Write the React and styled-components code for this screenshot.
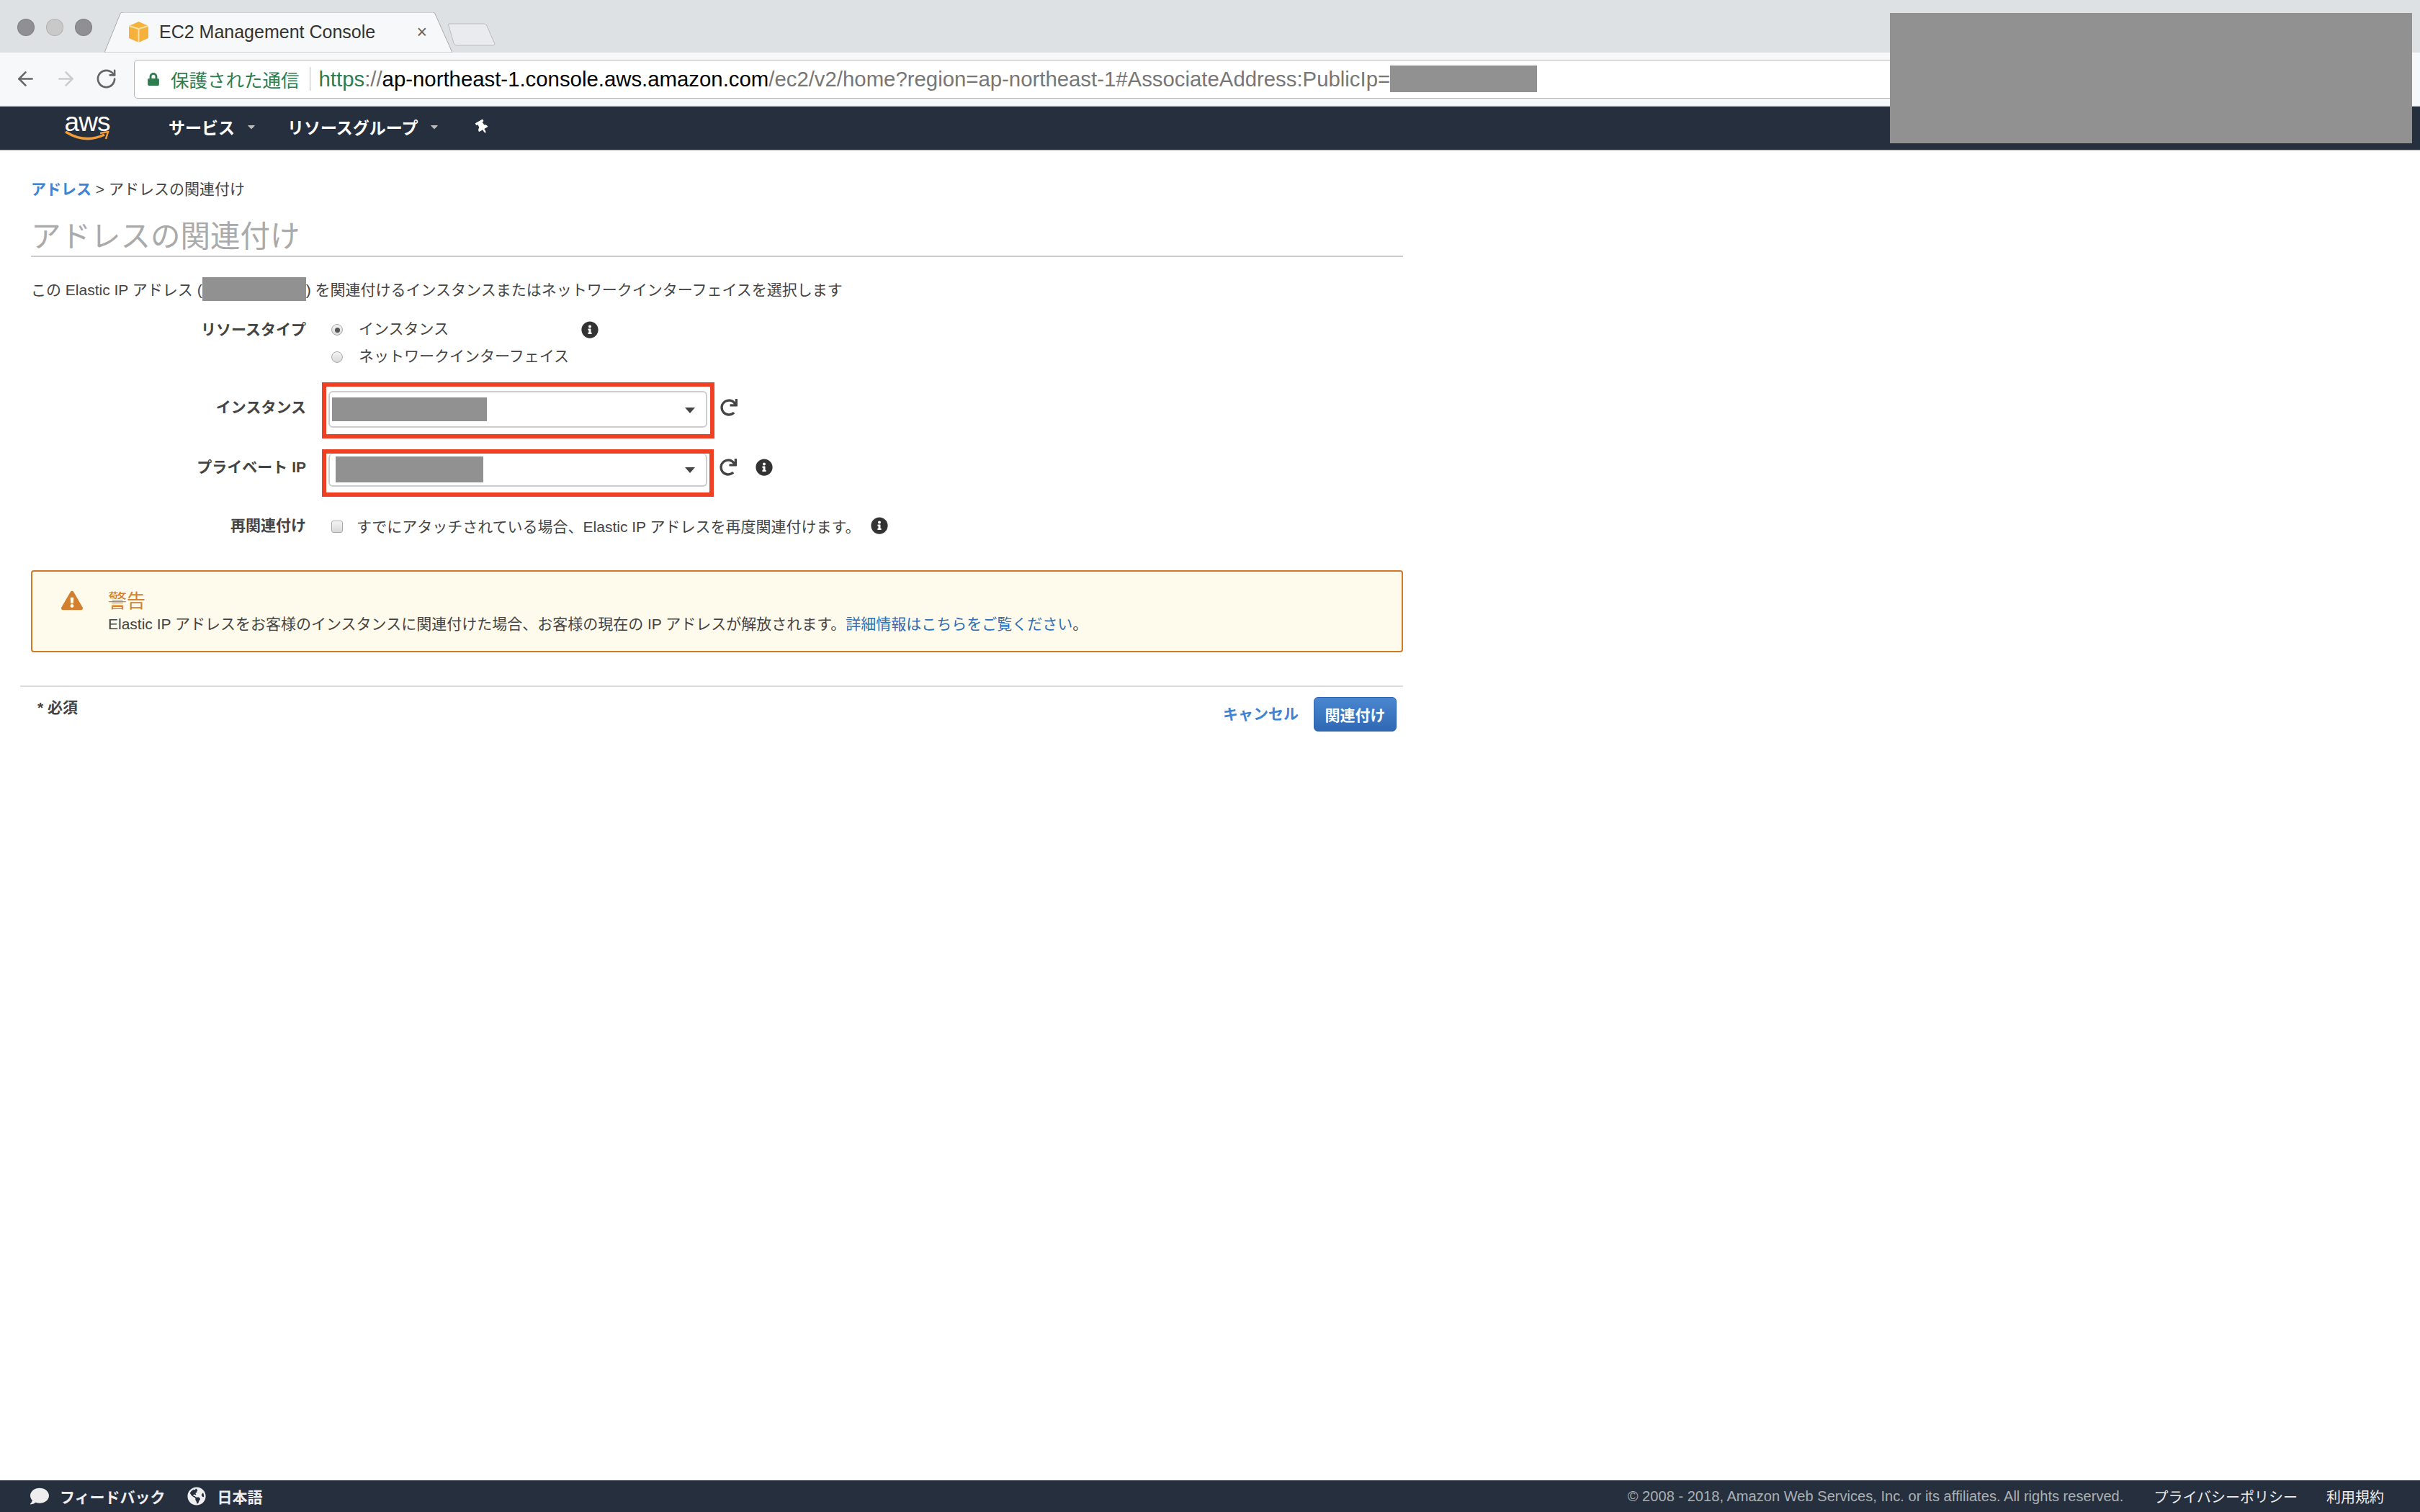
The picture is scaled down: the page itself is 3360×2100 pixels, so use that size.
import React from 'react';
import styled, { createGlobalStyle } from 'styled-components';
import { ArrowLeft, ArrowRight, RotateCw } from 'lucide-react';
import {
  FaInfoCircle,
  FaRedo,
  FaExclamationTriangle,
  FaComment,
  FaGlobeAmericas,
  FaThumbtack,
  FaLock,
  FaCaretDown,
} from 'react-icons/fa';

const GlobalStyle = createGlobalStyle`
html {
  box-sizing: border-box;
}
*, *:before, *:after {
  box-sizing: inherit;
}
body {
  margin: 0;
  background: #fff;
  color: #444;
  font-family: "Liberation Sans", "Noto Sans CJK JP", sans-serif;
  font-size: 21px;
}
`;

const Page = styled.div`
  position: relative;
  display: flex;
  flex-direction: column;
  width: 3360px;
  height: 2100px;
  overflow: hidden;
`;

const Redacted = styled.span`
  display: inline-block;
  flex: none;
  width: ${p => p.$w}px;
  height: ${p => p.$h}px;
  background: #919191;
  vertical-align: middle;
`;

const CornerRedaction = styled.div`
  position: absolute;
  top: 18px;
  left: 2624px;
  width: 725px;
  height: 181px;
  background: #919191;
`;

/* browser chrome */
const TabStrip = styled.div`
  display: flex;
  align-items: flex-end;
  height: 73px;
  background: #dee1e4;
`;

const Lights = styled.div`
  display: flex;
  gap: 16px;
  align-self: flex-start;
  margin: 26px 0 0 24px;
`;

const Light = styled.span`
  width: 24px;
  height: 24px;
  border-radius: 50%;
  background: ${p => p.$color};
  border: 1px solid rgba(0, 0, 0, 0.12);
`;

const Tab = styled.div`
  position: relative;
  display: flex;
  align-items: center;
  width: 483px;
  height: 56px;
  margin-left: 17px;
  padding: 0 0 2px 33px;
  color: #333;
  font-size: 25px;
`;

const TabShape = styled.svg`
  position: absolute;
  inset: 0;
  width: 100%;
  height: 100%;
`;

const TabIcon = styled.svg`
  position: relative;
  flex: none;
  width: 29px;
  height: 29px;
  margin-right: 14px;
`;

const TabTitle = styled.span`
  position: relative;
  flex: 1;
`;

const TabClose = styled.span`
  position: relative;
  margin-right: 35px;
  color: #666;
  font-size: 25px;
`;

const NewTab = styled.svg`
  flex: none;
  width: 66px;
  height: 32px;
  margin: 0 0 9px -6px;
`;

const Toolbar = styled.div`
  display: flex;
  align-items: center;
  height: 75px;
  padding: 0 30px 1px 0;
  background: #f6f8fa;
  border-bottom: 1px solid #ccc;
`;

const NavIcons = styled.div`
  display: flex;
  align-items: center;
  gap: 25px;
  width: 186px;
  padding-left: 20px;
  color: #666;
`;

const AddressBar = styled.div`
  flex: 1;
  display: flex;
  align-items: center;
  height: 54px;
  padding-left: 17px;
  background: #fff;
  border: 1px solid #b5b5b5;
  border-radius: 5px;
  font-size: 29.35px;
  color: #777;
  white-space: nowrap;
`;

const Secure = styled.span`
  display: flex;
  align-items: center;
  gap: 15px;
  height: 33px;
  padding-right: 14px;
  margin-right: 12px;
  border-right: 1px solid #bbb;
  color: #2e7d4f;
  font-size: 25.5px;
`;

const Scheme = styled.span`
  color: #2e7d4f;
`;

const Host = styled.span`
  color: #000;
`;

/* aws console bar */
const ConsoleBar = styled.div`
  display: flex;
  align-items: center;
  height: 62px;
  padding: 0 0 4px 90px;
  background: #262f3e;
  border-bottom: 2px solid #d8d8d8;
  color: #fff;
`;

const AwsLogo = styled.div`
  display: flex;
  flex-direction: column;
  align-items: center;
  width: 62px;
  margin-right: 82px;
`;

const AwsWord = styled.span`
  font-size: 37px;
  line-height: 24px;
  height: 24px;
  letter-spacing: -1px;
`;

const AwsSmile = styled.svg`
  width: 62px;
  height: 13px;
`;

const ConsoleMenu = styled.span`
  display: flex;
  align-items: center;
  margin-right: ${p => p.$gap}px;
  font-size: 23px;
  font-weight: 700;
`;

const Caret = styled(FaCaretDown)`
  width: 16px;
  height: 16px;
  margin-left: 15px;
  color: #bbb;
`;

const Pin = styled(FaThumbtack)`
  width: 17px;
  height: 19px;
  transform: rotate(-30deg);
`;

/* page content */
const Main = styled.main`
  flex: 1;
  width: 1948px;
  padding: 38px 0 0 43px;
`;

const Breadcrumb = styled.div`
  height: 30px;
  line-height: 30px;
  color: #444;
`;

const Link = styled.a`
  color: ${p => (p.$soft ? '#2f6db5' : '#3f83d4')};
  font-weight: ${p => (p.$soft ? 400 : 700)};
`;

const Title = styled.h1`
  margin: 26px 0 0;
  height: 53px;
  line-height: 50px;
  font-size: 41.5px;
  font-weight: 400;
  color: #aaa;
  border-bottom: 2px solid #ccc;
`;

const Description = styled.p`
  display: flex;
  align-items: center;
  gap: 0;
  height: 36px;
  margin: 26px 0 0;
  white-space: pre;
`;

const Form = styled.div`
  display: grid;
  grid-template-columns: 382px 1fr;
  column-gap: 22px;
  align-items: center;
  margin-top: 20px;
`;

const Label = styled.div`
  align-self: ${p => (p.$top ? 'start' : 'center')};
  text-align: right;
  font-weight: 700;
  line-height: 38px;
  margin-top: ${p => p.$mt || 0}px;
  padding-bottom: ${p => p.$lift || 0}px;
`;

const Field = styled.div`
  display: flex;
  align-items: center;
  min-height: 38px;
  margin-top: ${p => p.$mt || 0}px;
`;

const RadioList = styled.div`
  display: flex;
  flex-direction: column;
  padding-left: 13px;
`;

const RadioRow = styled.div`
  display: flex;
  align-items: center;
  height: 38px;
  line-height: 34px;
`;

const Radio = styled.span`
  display: flex;
  align-items: center;
  justify-content: center;
  width: 16px;
  height: 16px;
  margin-right: 22px;
  border-radius: 50%;
  border: 1px solid #aaa;
  background: linear-gradient(#f4f4f4, #d8d8d8);
  &::after {
    content: '';
    display: ${p => (p.$on ? 'block' : 'none')};
    width: 7px;
    height: 7px;
    border-radius: 50%;
    background: #555;
  }
`;

const RadioText = styled.span`
  margin-bottom: 3px;
`;

const Info = styled(FaInfoCircle)`
  flex: none;
  width: 24px;
  height: 24px;
  color: #333;
  margin-left: ${p => p.$ml || 0}px;
  margin-bottom: ${p => p.$lift || 0}px;
  align-self: ${p => (p.$top ? 'flex-start' : 'center')};
  margin-top: ${p => (p.$top ? 7 : 0)}px;
`;

const Highlight = styled.div`
  flex: none;
  width: ${p => p.$w}px;
  height: ${p => p.$h}px;
  padding: ${p => p.$pad};
  border: 6px solid #ee4023;
`;

const Select = styled.div`
  display: flex;
  align-items: center;
  justify-content: space-between;
  height: 100%;
  padding: ${p => (p.$clipped ? '0 15px 0 8px' : '0 15px 0 3px')};
  background: #fff;
  border: 2px solid #ccc;
  border-top-width: ${p => (p.$clipped ? 0 : 2)}px;
  border-radius: 6px;
`;

const SelectArrow = styled.span`
  width: 0;
  height: 0;
  margin-top: 2px;
  border-left: 7px solid transparent;
  border-right: 7px solid transparent;
  border-top: 8px solid #444;
`;

const Refresh = styled(FaRedo)`
  flex: none;
  width: 24px;
  height: 24px;
  margin-left: 8px;
  margin-bottom: ${p => p.$lift || 0}px;
  color: #444;
`;

const Checkbox = styled.span`
  flex: none;
  width: 16px;
  height: 17px;
  margin: 2px 19px 0 13px;
  border: 1px solid #aaa;
  border-radius: 3px;
  background: linear-gradient(#f4f4f4, #d8d8d8);
`;

const Alert = styled.div`
  display: flex;
  height: 114px;
  margin-top: 43px;
  padding: 26px 0 0 40px;
  background: #fffbec;
  border: 2px solid #cf7a28;
  border-radius: 4px;
`;

const AlertIcon = styled(FaExclamationTriangle)`
  flex: none;
  width: 30px;
  height: 28px;
  margin-right: 35px;
  color: #d27f2f;
`;

const AlertTitle = styled.div`
  font-size: 26px;
  line-height: 30px;
  color: #d27f2f;
`;

const AlertBody = styled.div`
  margin-top: 2px;
  line-height: 30px;
`;

const Actions = styled.div`
  display: flex;
  justify-content: space-between;
  align-items: flex-start;
  margin: 46px 0 0 -15px;
  padding: 14px 9px 0 24px;
  border-top: 2px solid #ddd;
`;

const Required = styled.span`
  margin-top: 2px;
  line-height: 26px;
  font-weight: 700;
`;

const ActionGroup = styled.div`
  display: flex;
  align-items: center;
  gap: 21px;
`;

const Cancel = styled.a`
  padding-bottom: 4px;
  color: #3f83d4;
  font-weight: 700;
`;

const Submit = styled.button`
  width: 115px;
  height: 48px;
  padding: 0;
  background: linear-gradient(#4a87d0, #2f68b4);
  border: 1px solid #2c62ab;
  border-radius: 6px;
  color: #fff;
  font: 700 21px "Liberation Sans", "Noto Sans CJK JP", sans-serif;
`;

/* footer */
const Footer = styled.footer`
  display: flex;
  align-items: center;
  height: 44px;
  padding: 0 50px 0 42px;
  background: #262f3e;
  color: #eee;
`;

const FooterLeft = styled.span`
  display: flex;
  align-items: center;
  margin-right: ${p => p.$gap}px;
  font-weight: 700;
`;

const Bubble = styled(FaComment)`
  width: 26px;
  height: 26px;
  margin-right: 15px;
`;

const Globe = styled(FaGlobeAmericas)`
  width: 26px;
  height: 26px;
  margin-right: 16px;
`;

const Copyright = styled.span`
  margin-left: auto;
  color: #aab0b3;
  font-size: 20.1px;
`;

const FooterLink = styled.span`
  margin-left: ${p => p.$ml}px;
  color: #eee;
  font-size: 20px;
`;

export default function App() {
  return (
    <Page>
      <GlobalStyle />
      <TabStrip>
        <Lights>
          <Light $color="#8f8f94" />
          <Light $color="#c9c9c9" />
          <Light $color="#8f8f94" />
        </Lights>
        <Tab>
          <TabShape viewBox="0 0 483 56" preserveAspectRatio="none">
            <path d="M0 56 L22 2 Q23 0 26 0 L456 0 Q458 0 459 2 L483 56 Z" fill="#f6f8fa" stroke="#aaa" strokeWidth="1" />
          </TabShape>
          <TabIcon viewBox="0 0 29 29">
            <path d="M14.5 0 L28 6 L28 23 L14.5 29 L1 23 L1 6 Z" fill="#f4b23c" />
            <path d="M1 6 L14.5 10 L28 6 M14.5 10 L14.5 29" fill="none" stroke="#fbe0a8" strokeWidth="2" />
          </TabIcon>
          <TabTitle>EC2 Management Console</TabTitle>
          <TabClose>×</TabClose>
        </Tab>
        <NewTab viewBox="0 0 66 32">
          <path d="M1 1 L50 1 Q53 1 54 4 L65 29 Q65 31 62 31 L12 31 Q9 31 8 28 L1 4 Q0 1 1 1 Z" fill="#e9ebee" stroke="#bbb" strokeWidth="1" />
        </NewTab>
      </TabStrip>
      <Toolbar>
        <NavIcons>
          <ArrowLeft size={31} strokeWidth={2} />
          <ArrowRight size={31} strokeWidth={2} color="#ccc" />
          <RotateCw size={31} strokeWidth={2} />
        </NavIcons>
        <AddressBar>
          <Secure>
            <FaLock size={18} />
            保護された通信
          </Secure>
          <span>
            <Scheme>https</Scheme>://<Host>ap-northeast-1.console.aws.amazon.com</Host>
            /ec2/v2/home?region=ap-northeast-1#AssociateAddress:PublicIp=
          </span>
          <Redacted $w={204} $h={37} />
        </AddressBar>
      </Toolbar>
      <ConsoleBar>
        <AwsLogo>
          <AwsWord>aws</AwsWord>
          <AwsSmile viewBox="0 0 62 13">
            <path d="M1 1 Q28 18 55 5" fill="none" stroke="#f29d38" strokeWidth="3.5" />
            <path d="M49 3 L60 1 L57 11" fill="none" stroke="#f29d38" strokeWidth="2.5" />
          </AwsSmile>
        </AwsLogo>
        <ConsoleMenu $gap={42}>サービス<Caret /></ConsoleMenu>
        <ConsoleMenu $gap={50}>リソースグループ<Caret /></ConsoleMenu>
        <Pin />
      </ConsoleBar>

      <Main>
        <Breadcrumb><Link>アドレス</Link> &gt; アドレスの関連付け</Breadcrumb>
        <Title>アドレスの関連付け</Title>
        <Description>
          この Elastic IP アドレス (<Redacted $w={144} $h={33} />) を関連付けるインスタンスまたはネットワークインターフェイスを選択します
        </Description>
        <Form>
          <Label $top>リソースタイプ</Label>
          <Field>
            <RadioList>
              <RadioRow><Radio $on /><RadioText>インスタンス</RadioText></RadioRow>
              <RadioRow><Radio /><RadioText>ネットワークインターフェイス</RadioText></RadioRow>
            </RadioList>
            <Info $ml={17} $top />
          </Field>

          <Label $mt={16} $lift={9}>インスタンス</Label>
          <Field $mt={16}>
            <Highlight $w={545} $h={78} $pad="6px 4px 9px 3px">
              <Select>
                <Redacted $w={215} $h={33} />
                <SelectArrow />
              </Select>
            </Highlight>
            <Refresh $lift={9} />
          </Field>

          <Label $mt={15} $lift={16}>プライベート IP</Label>
          <Field $mt={15}>
            <Highlight $w={544} $h={66} $pad="0 3px 8px 3px">
              <Select $clipped>
                <Redacted $w={205} $h={36} />
                <SelectArrow />
              </Select>
            </Highlight>
            <Refresh $lift={16} />
            <Info $ml={26} $lift={16} />
          </Field>

          <Label $mt={21}>再関連付け</Label>
          <Field $mt={21}>
            <Checkbox />
            すでにアタッチされている場合、Elastic IP アドレスを再度関連付けます。
            <Info $ml={15} />
          </Field>
        </Form>

        <Alert>
          <AlertIcon />
          <div>
            <AlertTitle>警告</AlertTitle>
            <AlertBody>
              Elastic IP アドレスをお客様のインスタンスに関連付けた場合、お客様の現在の IP アドレスが解放されます。<Link $soft>詳細情報はこちらをご覧ください</Link>。
            </AlertBody>
          </div>
        </Alert>

        <Actions>
          <Required>* 必須</Required>
          <ActionGroup>
            <Cancel>キャンセル</Cancel>
            <Submit>関連付け</Submit>
          </ActionGroup>
        </Actions>
      </Main>

      <Footer>
        <FooterLeft $gap={30}><Bubble />フィードバック</FooterLeft>
        <FooterLeft $gap={0}><Globe />日本語</FooterLeft>
        <Copyright>© 2008 - 2018, Amazon Web Services, Inc. or its affiliates. All rights reserved.</Copyright>
        <FooterLink $ml={42}>プライバシーポリシー</FooterLink>
        <FooterLink $ml={40}>利用規約</FooterLink>
      </Footer>
      <CornerRedaction />
    </Page>
  );
}
